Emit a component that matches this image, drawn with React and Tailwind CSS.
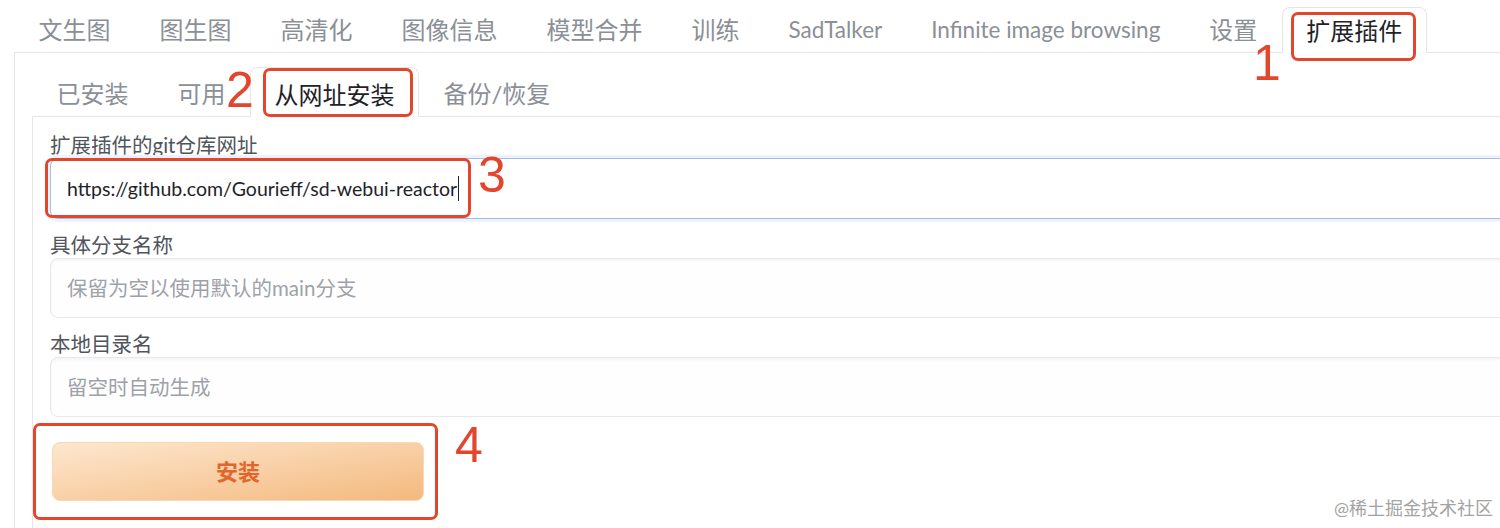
import React from "react";

const topTabs = [
  { label: "文生图" },
  { label: "图生图" },
  { label: "高清化" },
  { label: "图像信息" },
  { label: "模型合并" },
  { label: "训练" },
  { label: "SadTalker", latin: true },
  { label: "Infinite image browsing", latin: true },
  { label: "设置" },
  { label: "扩展插件", active: true },
];

const subTabs = [
  { label: "已安装" },
  { label: "可用" },
  { label: "从网址安装", active: true },
  { label: "备份/恢复" },
];

const Tab = ({ label, active, latin, height }) => (
  <div
    className={`flex items-center ${height} ${latin ? "text-[22.5px]" : "text-[24px]"} ${
      active
        ? "px-[23.5px] bg-white border border-b-0 border-[#e4e6ea] rounded-t-[8px] -mb-px text-[#1f2328]"
        : "px-[24.5px] text-[#8b8f96]"
    }`}
  >
    {label}
  </div>
);

const Field = ({ label, children }) => (
  <div className="flex flex-col">
    <div className="text-[20.5px] leading-[26px] text-[#50555c]">{label}</div>
    {children}
  </div>
);

// red annotation marks drawn over the UI
const Mark = ({ className }) => (
  <div className={`absolute border-[3px] border-[#e4462d] rounded-[7px] ${className}`} />
);

const Num = ({ children, className }) => (
  <span
    className={`absolute text-[50px] leading-none text-[#e4462d] ${className}`}
    style={{ fontFamily: '"Liberation Sans", Arial, sans-serif' }}
  >
    {children}
  </span>
);

export default function App() {
  return (
    <div
      className="relative w-[1500px] h-[528px] overflow-hidden bg-white pl-[14px]"
      style={{ fontFamily: 'Lato, "Noto Sans CJK SC", sans-serif' }}
    >
      {/* main tabs */}
      <div className="flex items-end h-[53px] w-[1600px] border-b border-[#e4e6ea]">
        {topTabs.map((t) => (
          <Tab key={t.label} {...t} height={t.active ? "h-[46px] pt-[1px]" : "h-[45px] pt-[1px]"} />
        ))}
      </div>

      {/* outer panel */}
      <div className="w-[1600px] h-[475px] border-l border-[#e4e6ea] pl-[17px] pt-[15px]">
        <div className="flex items-end h-[49px] border-b border-[#e4e6ea]">
          {subTabs.map((t) => (
            <Tab key={t.label} {...t} height={t.active ? "h-[50px] pt-[4px]" : "h-[49px] pt-[4px]"} />
          ))}
        </div>

        {/* inner panel */}
        <div className="h-full border-l border-[#e4e6ea] pl-[17px] pt-[15px] flex flex-col gap-[13px]">
          <Field label="扩展插件的git仓库网址">
            <div className="h-[61px] flex items-center px-4 bg-white border border-[#a4bde6] rounded-[8px] shadow-[0_0_0_3px_#edf3fc] text-[19.5px] text-[#1f2328]">
              https://github.com/Gourieff/sd-webui-reactor
              <span className="w-px h-[25px] bg-[#1f2328] ml-[1px]" />
            </div>
          </Field>
          <Field label="具体分支名称">
            <input
              readOnly
              placeholder="保留为空以使用默认的main分支"
              className="h-[60px] px-4 bg-[#fefefe] border border-[#e6e8eb] rounded-[8px] shadow-[inset_0_2px_3px_rgba(0,0,0,0.04)] text-[20.5px] outline-none placeholder:text-[#9ea2a8]"
            />
          </Field>
          <Field label="本地目录名">
            <input
              readOnly
              placeholder="留空时自动生成"
              className="h-[60px] px-4 bg-[#fefefe] border border-[#e6e8eb] rounded-[8px] shadow-[inset_0_2px_3px_rgba(0,0,0,0.04)] text-[20.5px] outline-none placeholder:text-[#9ea2a8]"
            />
          </Field>
          <button className="mt-[12px] ml-[2px] w-[372px] h-[59px] rounded-[8px] border border-[#f9d8b4] bg-linear-to-br from-[#fde7cf] to-[#f3b97d] text-[22px] font-bold text-[#e0672b]">
            安装
          </button>
        </div>
      </div>

      {/* annotations */}
      <Mark className="left-[1291px] top-[12px] w-[125px] h-[49px]" />
      <Num className="left-[1253px] top-[38px]">1</Num>
      <Mark className="left-[263px] top-[68px] w-[150px] h-[49px]" />
      <Num className="left-[226px] top-[65px]">2</Num>
      <Mark className="left-[45px] top-[158px] w-[426px] h-[60px]" />
      <Num className="left-[478px] top-[150px]">3</Num>
      <Mark className="left-[33px] top-[423px] w-[405px] h-[97px]" />
      <Num className="left-[455px] top-[420px]">4</Num>

      <span className="absolute right-[7px] bottom-[6px] text-[18px] text-[#a3a3a3]">
        @稀土掘金技术社区
      </span>
    </div>
  );
}
